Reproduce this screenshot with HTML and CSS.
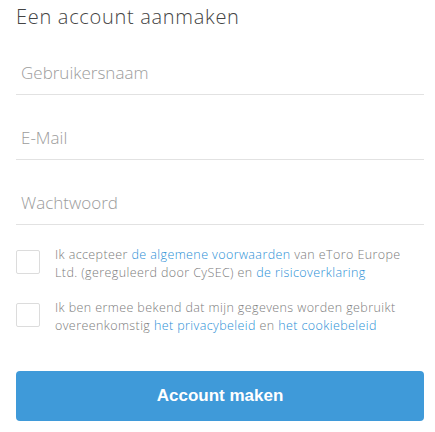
FILE: index.html
```html
<!DOCTYPE html>
<html lang="nl">
<head>
<meta charset="utf-8">
<title>Een account aanmaken</title>
<link rel="stylesheet" href="styles.css">
</head>
<body>
<div class="page">
  <h1 class="title">Een account aanmaken</h1>
  <div class="field"><span class="placeholder">Gebruikersnaam</span></div>
  <div class="field"><span class="placeholder">E-Mail</span></div>
  <div class="field"><span class="placeholder">Wachtwoord</span></div>
  <div class="consents">
    <div class="consent">
      <span class="box"></span>
      <p class="consent-text">Ik accepteer <a href="#">de algemene voorwaarden</a> van eToro Europe Ltd. (gereguleerd door CySEC) en <a href="#">de risicoverklaring</a></p>
    </div>
    <div class="consent">
      <span class="box"></span>
      <p class="consent-text">Ik ben ermee bekend dat mijn gegevens worden gebruikt overeenkomstig <a href="#">het privacybeleid</a> en <a href="#">het cookiebeleid</a></p>
    </div>
  </div>
  <button class="submit" type="button">Account maken</button>
</div>
</body>
</html>
```

FILE: styles.css
```css
html, body {
  margin: 0;
  padding: 0;
  background: #ffffff;
}

.page {
  padding: 0 11px 0 16px;
  font-family: "Open Sans", "Noto Sans", sans-serif;
}

.title {
  margin: 0;
  padding-top: 3px;
  height: 27px;
  font-size: 20px;
  font-weight: 300;
  line-height: 28px;
  letter-spacing: 0.7px;
  color: #444444;
}

.field {
  box-sizing: border-box;
  height: 65px;
  display: flex;
  align-items: flex-end;
  padding: 0 0 9px 5px;
  border-bottom: 1px solid #e2e2e2;
}

.placeholder {
  font-size: 17px;
  font-weight: 300;
  line-height: 24px;
  color: #9c9c9c;
}

.consents {
  display: flex;
  flex-direction: column;
  gap: 17px;
  margin-top: 21px;
}

.consent {
  display: flex;
  align-items: flex-start;
  gap: 15px;
}

.box {
  flex: none;
  box-sizing: border-box;
  width: 24px;
  height: 24px;
  margin-top: 4px;
  border: 1px solid #dcdcdc;
  border-radius: 2px;
  background: #ffffff;
}

.consent-text {
  margin: 0;
  font-size: 12.5px;
  font-weight: 300;
  line-height: 18px;
  letter-spacing: 0.4px;
  color: #7c7c7c;
}

.consent-text a {
  color: #2a8fd6;
  text-decoration: none;
}

.submit {
  display: block;
  width: 408px;
  height: 50px;
  margin-top: 36px;
  border: 0;
  border-radius: 4px;
  background: #3f9ad9;
  color: #ffffff;
  font-family: "Liberation Sans", Arial, sans-serif;
  font-size: 17px;
  font-weight: 700;
  line-height: 50px;
  padding: 0;
  text-align: center;
}
```
